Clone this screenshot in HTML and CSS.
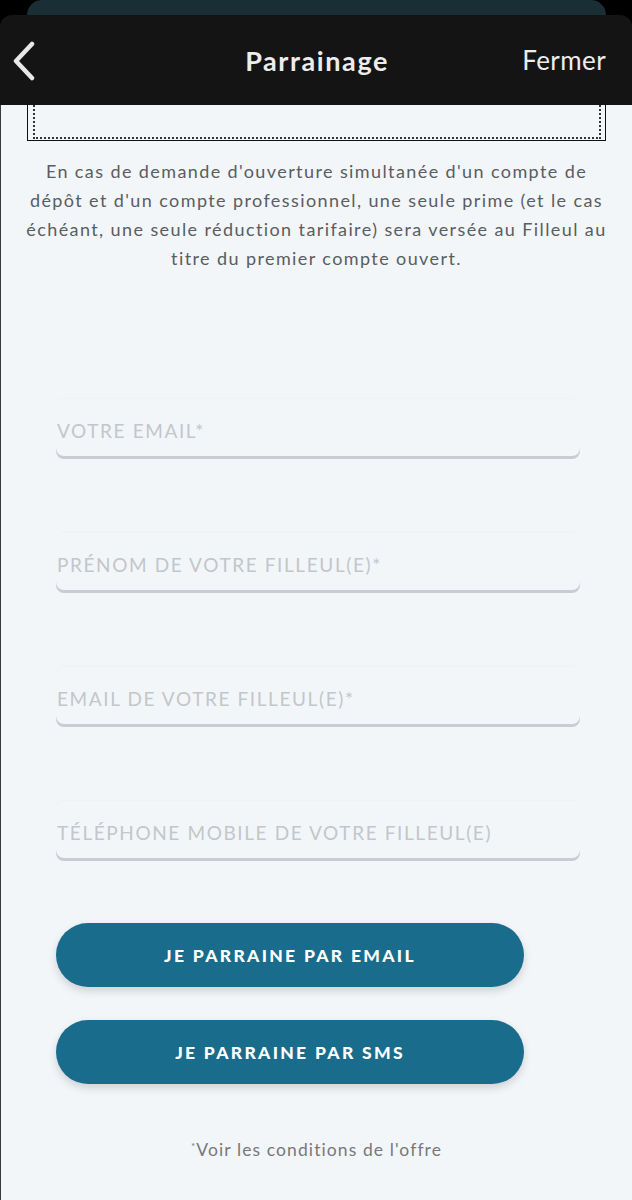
FILE: index.html
```html
<!DOCTYPE html>
<html lang="fr">
<head>
<meta charset="utf-8">
<title>Parrainage</title>
<link rel="stylesheet" href="styles.css">
</head>
<body>
<div class="behind-card"></div>
<header class="sheet-header">
  <button class="back" aria-label="Retour">
    <svg width="24" height="40" viewBox="0 0 24 40"><path d="M20 3 L4 20 L20 37" fill="none" stroke="#e8e8e8" stroke-width="4.5" stroke-linecap="round" stroke-linejoin="round"/></svg>
  </button>
  <h1 class="title">Parrainage</h1>
  <span class="close">Fermer</span>
</header>
<main class="content">
  <div class="framed"><div class="framed-inner"></div></div>
  <p class="notice">
    <span>En cas de demande d'ouverture simultanée d'un compte de</span><br>
    <span>dépôt et d'un compte professionnel, une seule prime (et le cas</span><br>
    <span>échéant, une seule réduction tarifaire) sera versée au Filleul au</span><br>
    <span>titre du premier compte ouvert.</span>
  </p>
  <form class="form">
    <div class="field"><input type="text" placeholder="VOTRE EMAIL*"></div>
    <div class="field"><input type="text" placeholder="PRÉNOM DE VOTRE FILLEUL(E)*"></div>
    <div class="field"><input type="text" placeholder="EMAIL DE VOTRE FILLEUL(E)*"></div>
    <div class="field"><input type="text" placeholder="TÉLÉPHONE MOBILE DE VOTRE FILLEUL(E)"></div>
    <div class="actions">
      <button type="button" class="cta">JE PARRAINE PAR EMAIL</button>
      <button type="button" class="cta">JE PARRAINE PAR SMS</button>
    </div>
  </form>
  <p class="conditions"><sup>*</sup>Voir les conditions de l'offre</p>
</main>
</body>
</html>
```
FILE: styles.css
```css
html, body {
  margin: 0;
  padding: 0;
}
body {
  background: #000;
  font-family: Lato, "Open Sans", sans-serif;
  width: 632px;
  overflow: hidden;
}
.behind-card {
  height: 15px;
  margin: 0 26px 0 27px;
  background: #1a2e36;
  border-radius: 16px 16px 0 0;
}
.sheet-header {
  height: 90px;
  background: #141414;
  border-radius: 12px 12px 0 0;
  display: flex;
  align-items: center;
  padding: 0 26px 0 12px;
  position: relative;
}
.back {
  background: none;
  border: 0;
  padding: 0;
  width: 30px;
  height: 40px;
  display: flex;
  align-items: center;
  margin-top: 2px;
}
.title {
  flex: 1;
  text-align: center;
  margin: 0;
  color: #ececec;
  font-family: Lato, sans-serif;
  font-weight: 700;
  font-size: 27px;
  letter-spacing: 1.6px;
  padding-left: 70px;
}
.close {
  color: #ececec;
  font-size: 26px;
  font-family: Lato, sans-serif;
  letter-spacing: 0.4px;
}
.content {
  background: #f2f6f9;
  min-height: 1095px;
  border-left: 1px solid #3a3a3a;
  padding-top: 0;
}
.framed {
  height: 32px;
  margin: 0 26px 0 26px;
  border: 1px solid #111;
  border-top: 0;
  padding: 0 4px 3px 5px;
}
.framed-inner {
  height: 100%;
  border: 2px dotted #333;
  border-top: 0;
}
.notice {
  margin: 16px 0 0;
  text-align: center;
  color: #5a5d61;
  font-size: 18px;
  line-height: 29px;
  letter-spacing: 1.4px;
  white-space: nowrap;
}
.form {
  margin: 126px 0 0 55px;
  width: 524px;
}
.field {
  height: 57px;
  border-radius: 8px;
  box-shadow: 0 3px 0 #c9ccd0, 0 -1px 2px rgba(0,0,0,0.02);
  margin-bottom: 77px;
  display: flex;
  align-items: center;
}
.field input {
  border: 0;
  background: transparent;
  width: 100%;
  height: 100%;
  padding: 0 0 0 1px;
  font-family: Lato, sans-serif;
  font-size: 19px;
  letter-spacing: 1.6px;
  color: #444;
  outline: none;
  margin-top: 6px;
}
.field input::placeholder {
  color: #c3c6ca;
}
.actions {
  display: flex;
  flex-direction: column;
  gap: 33px;
  margin-top: -12px;
}
.cta {
  width: 468px;
  height: 64px;
  border: 0;
  border-radius: 32px;
  background: #196c8b;
  color: #fff;
  font-family: Lato, sans-serif;
  font-weight: 900;
  font-size: 17.5px;
  letter-spacing: 2.3px;
  box-shadow: 0 4px 8px rgba(0,0,0,0.15);
}
.conditions {
  margin: 51px 0 0;
  text-align: center;
  color: #76797d;
  font-size: 17.5px;
  letter-spacing: 1.1px;
  line-height: 22px;
}
.conditions sup {
  font-size: 10px;
  vertical-align: 6px;
}
```
